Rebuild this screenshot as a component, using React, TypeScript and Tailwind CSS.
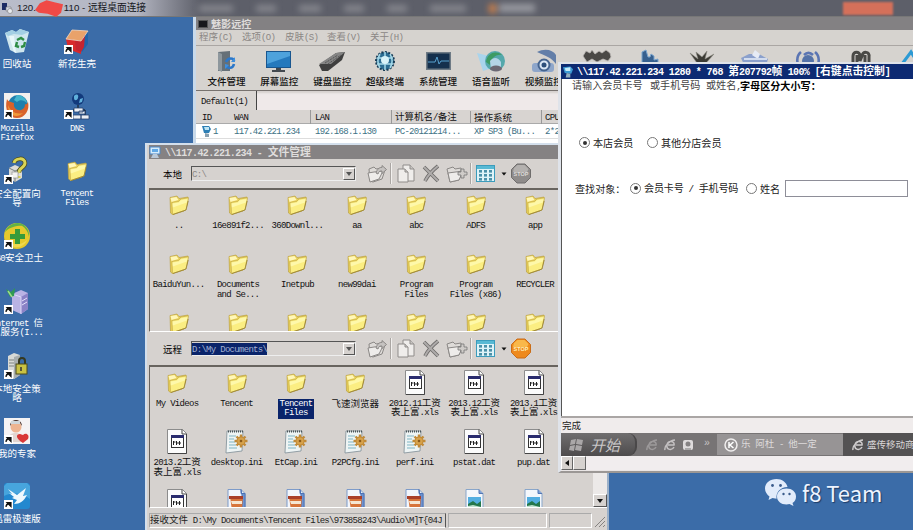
import type { ReactNode } from 'react';

type Size = 'sm' | 'md' | 'lg';

const CJK: Record<Size, string> = {
  sm: "font-['Noto_Sans_CJK_SC',sans-serif] text-[9.500px]",
  md: "font-['Noto_Sans_CJK_SC',sans-serif] text-[10.100px]",
  lg: "font-['Noto_Sans_CJK_SC',sans-serif] text-[10.800px]",
};
const LATIN: Record<Size, string> = {
  sm: "font-['Liberation_Mono',monospace] text-[9px] tracking-[-0.700px]",
  md: "font-['Liberation_Mono',monospace] text-[9.400px] tracking-[-0.600px]",
  lg: "font-['Liberation_Mono',monospace] text-[10px] tracking-[-0.600px]",
};

function T({ s, size = 'sm', className = '' }: { s: string; size?: Size; className?: string }) {
  const parts = s.match(/[\u2e80-\uffff]+|[^\u2e80-\uffff]+/g) ?? [];
  return (
    <span className={'whitespace-pre ' + CJK[size] + ' ' + className}>
      {parts.map((p, i) => (
        <span key={i} className={/[\u2e80-\uffff]/.test(p) ? '' : LATIN[size]}>
          {p}
        </span>
      ))}
    </span>
  );
}

function Lines({ text }: { text: string }) {
  return (
    <>
      {text.split('\n').map((l, i) => (
        <div key={i} className="flex h-[9.400px] items-center justify-center leading-[9.400px]">
          <T s={l} />
        </div>
      ))}
    </>
  );
}

/* ---------- desktop icons ---------- */

function Shortcut() {
  return (
    <g>
      <rect x="0" y="17" width="9" height="9" fill="#fff" />
      <path d="M2 24c0-2.500 1-3.500 3-3.500M3 19.500h4v4z" fill="#111" stroke="#111" strokeWidth="1.200" />
    </g>
  );
}

function Ico({ children, shortcut = true }: { children: ReactNode; shortcut?: boolean }) {
  return (
    <svg viewBox="0 0 26 26" className="h-[26px] w-[26px] overflow-visible">
      {children}
      {shortcut && <Shortcut />}
    </svg>
  );
}

const recycle = (
  <Ico shortcut={false}>
    <path d="M1 5l7-3 4 2 4-3 9 3-5 20-8 1-6-3z" fill="#cfe6ee" />
    <path d="M1 5l7-3 4 2 4-3 9 3-7 3-8-1-6 2z" fill="#a3cfe4" />
    <path d="M5 8l5 16 2 1-2-17z" fill="#e9f7fa" />
    <path d="M13 12l4-2 3 2M21 14l-1 4-3 1M15 19l-3-1 1-4" fill="none" stroke="#2f8d45" strokeWidth="2.400" />
  </Ico>
);
const xinhua = (
  <Ico>
    <path d="M2 11L8 2l16 1-7 10z" fill="#e9a26a" />
    <path d="M2 11l15 2v13L4 21z" fill="#d82a2c" />
    <path d="M17 13l7-10v13l-6 8z" fill="#1f63a8" />
    <path d="M11 13l6 0 4-6-1 12-3 5-5-2z" fill="#c42430" />
    <path d="M2 11L8 2l16 1-7 10z" fill="none" stroke="#f6d9c0" strokeWidth=".8" />
  </Ico>
);
const firefox = (
  <Ico>
    <rect width="26" height="26" fill="#f3f0ee" />
    <circle cx="14" cy="12" r="10" fill="#1d7fae" />
    <path d="M13 2c5 0 9 3 10 8-3-3-7-4-10-1l-3-2z" fill="#43b4cc" />
    <path d="M3 6c1 3 5 3 7 4-1 5 3 8 7 7 3-1 4-3 4-6 1 1 2 0 3-2 2 8-3 16-11 16S0 17 3 6z" fill="#d9622a" />
    <path d="M4 12c2 6 8 10 15 8-6 6-15 3-15-8z" fill="#f09a3a" />
  </Ico>
);
const dns = (
  <Ico>
    <circle cx="14" cy="6" r="6" fill="#123a7c" />
    <path d="M10 3c3-3 5-1 4 2s-4 3-4 0zM16 6l3-1-1 4-3 1z" fill="#5fb0dc" />
    <path d="M14 12v4M9 17h12v5M4 25V19" stroke="#111" fill="none" />
    <path d="M10 15h9v4h-9zM9 22h8v4H9zM17 22h8v4h-8zM15 18h6v3h-6z" fill="#eceff4" stroke="#27436e" strokeWidth=".8" />
  </Ico>
);
const security = (
  <Ico>
    <path d="M5 10l6-3 7 3v10l-7 4-6-4z" fill="#dcdcd8" />
    <path d="M5 10l6 3v11M11 13l7-3" fill="none" stroke="#77807f" />
    <path d="M10 5c1-5 11-6 11 0 0 5-7 5-6 10" fill="none" stroke="#4a4a1c" strokeWidth="4.500" />
    <path d="M10 5c1-5 11-6 11 0 0 5-7 5-6 10M15 18v2" fill="none" stroke="#d9d556" strokeWidth="3" />
    <rect x="8" y="14" width="6" height="6" fill="#f3f3f0" stroke="#888" strokeWidth=".6" />
  </Ico>
);
const s360 = (
  <Ico>
    <circle cx="13" cy="13" r="13" fill="#e5c92c" />
    <path d="M1 9C4 1 14-3 21 3c-5-1-15 0-20 6zM15 1c6 0 11 6 10 13-1-6-4-10-10-13z" fill="#62b345" />
    <path d="M11 6h5v5h5v5h-5v5h-5v-5H6v-5h5z" fill="#379b3a" />
    <path d="M3 17c4 5 14 6 20 0-2 7-15 12-20 0z" fill="#f2df60" opacity=".7" />
  </Ico>
);
const iis = (
  <Ico>
    <path d="M8 6l9-4 7 3v16l-7 5-9-4z" fill="#b9b3e4" />
    <path d="M17 9l7-4v16l-7 5z" fill="#8a82c6" />
    <path d="M8 6l9 3v17" fill="none" stroke="#ddd8f8" />
    <path d="M18 13l5-3M18 17l5-3" stroke="#e6e2fb" />
    <path d="M2 1l5 3 4-4-1 8-4 1z" fill="#2f9a51" />
    <path d="M4 3l4 6" stroke="#9fdc8a" strokeWidth="1.500" />
  </Ico>
);
const policy = (
  <Ico>
    <path d="M4 3l6-3 6 2v20l-6 4-6-3z" fill="#d8dad6" />
    <path d="M10 4l6-2v20l-6 4z" fill="#a8aeae" />
    <path d="M5 7h5M5 10h5M5 13h5" stroke="#7d8380" />
    <path d="M15 12V8c0-4 6-4 6 0v4" fill="none" stroke="#34381f" strokeWidth="2" />
    <rect x="12" y="11" width="11" height="10" fill="#c9c243" stroke="#4c4b1a" />
    <path d="M17 14v4" stroke="#333" strokeWidth="1.500" />
  </Ico>
);
const expert = (
  <Ico>
    <rect width="26" height="26" fill="#f5f3f4" />
    <path d="M3 24c1-8 5-9 9-9s7 2 8 9z" fill="#e2d5d0" />
    <circle cx="12" cy="9" r="5.500" fill="#edb491" />
    <path d="M6 8c0-8 12-8 12 0l-2-3H8z" fill="#513b35" />
    <path d="M7 3h9v3H7z" fill="#cfd6da" />
    <path d="M19 25c-8-5-7-9-3-9l3 1c3-3 7 0 5 4z" fill="#d93838" />
  </Ico>
);
const xunlei = (
  <Ico>
    <rect width="26" height="26" rx="3" fill="#2388cf" />
    <path d="M0 13c9-4 18-3 26 3v-13l-3-3H3L0 3z" fill="#47a5dd" />
    <path d="M4 6l9 6 9-7-3 8 4-1c-3 6-7 9-13 9l3-4-5-2 2-1-5-4 3 1z" fill="#eef8fd" />
  </Ico>
);

function Folder() {
  return (
    <svg viewBox="0 0 20 20" className="h-5 w-5 shrink-0">
      <path d="M1 2.500l7-1.500 2 2.500 9-1.500-.5 7L15 16 3.500 19.500 1.500 18z" fill="#e8cf57" stroke="#b59b3c" strokeWidth=".6" />
      <path d="M1.500 3l6-1 2 3-7 2z" fill="#fff7b8" />
      <path d="M3 7.500l6.500-1L12 4l7.500-1.200L17 15 3.500 19.500z" fill="#fbee82" stroke="#c0a544" strokeWidth=".6" />
      <path d="M3.500 8.500L10 7.500l2-2.300 6.500-1-.7 3.300-14 5z" fill="#fffab4" opacity=".8" />
      <path d="M4 19.500L17 15l2.200-9" fill="none" stroke="#8f7a2c" strokeWidth=".7" />
    </svg>
  );
}

function DesktopItem({ icon, label }: { icon: ReactNode; label: string }) {
  return (
    <div className="flex h-[65px] w-[60px] flex-col items-center text-white">
      <div className="mb-[4.500px] flex h-[26px] items-center">{icon}</div>
      <Lines text={label} />
    </div>
  );
}

/* ---------- file type icons ---------- */

function Xls() {
  return (
    <svg viewBox="0 0 20 25" className="h-[25px] w-5">
      <path d="M.5.5h15l4 4v20H.5z" fill="#fbfbfb" stroke="#8c8c8c" />
      <path d="M15 .5v4.500h4.500M19.500 5v19.500H1" fill="none" stroke="#444" />
      <rect x="4.500" y="6.500" width="12" height="12" fill="#fff" stroke="#333" />
      <rect x="4" y="6" width="13" height="3" fill="#2a2c6e" />
      <path d="M6.500 12v4M9.500 12v4M12.500 12v4M6.500 13h2M10 14h4" stroke="#222" />
    </svg>
  );
}
function Ini() {
  return (
    <svg viewBox="0 0 23 25" className="h-[25px] w-[23px]">
      <path d="M2 2h16l-1 20-16 2z" fill="#eef4f4" stroke="#7e8d96" strokeWidth=".8" />
      <path d="M3 2.500h15" stroke="#4a5458" strokeWidth="2" strokeDasharray="1 1" />
      <path d="M4 7h7M4 10h5M4 13h6M4 16h7M4 19h8" stroke="#7fb5c4" />
      <g transform="translate(16 12)">
        <circle r="4.500" fill="#c98a2c" />
        <path d="M0-6.500V6.500M-6.500 0H6.500M-4.500-4.500l9 9M4.500-4.500l-9 9" stroke="#c08a38" strokeWidth="2.400" />
        <circle r="3.500" fill="#d6a24c" />
        <circle r="1.300" fill="#8b5b1b" />
      </g>
    </svg>
  );
}
function Clip() {
  return (
    <svg viewBox="0 0 19 24" className="h-6 w-[19px]">
      <path d="M1 .5h13l4 4v19H1z" fill="#f2f5fb" stroke="#7d9bc9" />
      <path d="M14 .5v4h4v19h-3V6z" fill="#6f93cf" stroke="#4e73b4" />
      <path d="M3 7h13l-1 15H5z" fill="#d7743a" />
      <path d="M2 7h14v3H2z" fill="#a93f28" />
      <path d="M4 12h11v3H5z" fill="#f5e6d2" />
    </svg>
  );
}
function Pic() {
  return (
    <svg viewBox="0 0 19 24" className="h-6 w-[19px]">
      <path d="M1 .5h13l4 4v19H1z" fill="#f4f7fb" stroke="#89a6ca" />
      <path d="M14 .5v4h4" fill="#7ea1d6" stroke="#5377b4" />
      <rect x="3" y="8" width="13" height="11" fill="#53aee0" />
      <path d="M3 15l5-3 4 3 4-3v7H3z" fill="#23774b" />
      <path d="M3 17l5-1 8 2v1H3z" fill="#bfe0cf" />
    </svg>
  );
}

function FileItem({ icon, label, selected }: { icon: ReactNode; label: string; selected?: boolean }) {
  return (
    <div className="flex h-[59.300px] w-[59.400px] shrink-0 flex-col items-center text-[#111]">
      <div className="mb-[4px] flex h-[25px] items-center">{icon}</div>
      <div className={selected ? 'bg-[#0a246a] px-[2px] pb-[1px] text-white' : ''}>
        <Lines text={label} />
      </div>
    </div>
  );
}

/* ---------- file window toolbar ---------- */

function PathBar({ title, path, remote }: { title: string; path: string; remote?: boolean }) {
  return (
    <div className={'flex shrink-0 items-center pl-[14px] ' + (remote ? 'h-[33px]' : 'h-[29px]')}>
      <T s={title} className="w-[28px] text-black" />
      <div className="flex h-[15px] w-[165px] items-center border border-b-[#eee] border-r-[#eee] border-l-[#555] border-t-[#555] bg-[#d6d2cf]">
        <div className={'flex h-[12px] items-center leading-[12px] ' + (remote ? 'bg-[#0a246a] text-[#a3b1d4]' : 'text-[#8c8886]')}>
          <T s={path} />
        </div>
        <div className="ml-auto flex h-[12px] w-[12px] items-center justify-center border border-b-[#555] border-r-[#555] border-l-white border-t-white">
          <svg viewBox="0 0 6 4" className="h-[4px] w-[6px]"><path d="M0 0h6L3 4z" fill="#555" /></svg>
        </div>
      </div>
      <svg viewBox="0 0 180 24" className="ml-[8px] h-6 w-[180px]">
        <g strokeWidth="1" stroke="#8b8886" fill="#dedbd8">
          <path d="M5 7l5-2 2 2 6-1 3 2-3 9-9 3-3-1z" />
          <path d="M4 11l6-1 9-1-4 8-9 3z" fill="#eeecea" />
          <path d="M12 11c1-4 4-6 6-5.500V3.500l4.500 4-4.500 4V9c-2 0-3 0-4 3z" fill="#c5c2c0" />
        </g>
        <path d="M26.500 1v21M106.500 1v21" stroke="#aaa6a3" />
        <path d="M27.500 1v21M107.500 1v21" stroke="#f2f0ee" />
        <g stroke="#8f8c8a" fill="#efedeb">
          <path d="M39 3h7l4 4v12H39z" />
          <path d="M46 3v4h4" fill="#c9c6c3" />
          <path d="M34 7h7l3 3v10H34z" />
          <path d="M41 7v3h3" fill="#c9c6c3" />
        </g>
        <path d="M60 5l14 14M74 4c-5 4-10 9-13 15" stroke="#6d6b6a" strokeWidth="3.600" fill="none" />
        <path d="M60 5l14 14M74 4c-5 4-10 9-13 15" stroke="#aeabaa" strokeWidth="2" fill="none" />
        <path d="M83 7l6-2 2 2 6-1v3l-2 9-9 2z" fill="#dedbd8" stroke="#8b8886" />
        <path d="M84 11l15-2-4 9-9 2z" fill="#eeecea" stroke="#8b8886" />
        <path d="M94 10h3V7h3v3h3v3h-3v3h-3v-3h-3z" fill="#cfccc9" stroke="#777" strokeWidth=".8" />
        <rect x="112.500" y="3.500" width="18" height="16" fill="#def3f8" stroke="#3b9cbc" />
        <rect x="113" y="4" width="17" height="3" fill="#58b9d4" />
        <g fill="#4b91a9">
          {[115, 120, 125].map((x) => [9, 13, 17].map((y) => <rect key={x + '-' + y} x={x} y={y - 1} width="3" height="2.600" />))}
        </g>
        <path d="M137.500 10.500h5l-2.500 3z" fill="#111" />
        <path d="M153 2h8l5.500 5.500v8L161 21h-8l-5.500-5.500v-8z" fill={remote ? '#ee8a1d' : '#8f8c8b'} stroke={remote ? '#c96d18' : '#6f6d6c'} />
        <path d="M150 6l3.500-3h7l4 4-1.500 3h-14z" fill={remote ? '#f9b84a' : '#b4b1af'} />
        <text x="157" y="14" textAnchor="middle" className="font-['Liberation_Sans',sans-serif] text-[5.500px] font-bold" fill={remote ? '#fff0b8' : '#dedbd9'}>STOP</text>
      </svg>
    </div>
  );
}

/* ---------- main window toolbar icons ---------- */

const mainTools: { label: string; art: ReactNode }[] = [
  { label: '文件管理', art: <><path d="M5 2l12-1v20H5z" fill="#667078" /><path d="M5 2l4 2v18l-4-2z" fill="#8e979d" /><path d="M13 12c2-5 8-4 8-1M21 14c-1 5-7 5-8 1" stroke="#2c77c9" strokeWidth="2.500" fill="none" /><path d="M22 7v5h-4zM12 19v-5l4 1z" fill="#3f8fdd" /></> },
  { label: '屏幕监控', art: <><rect x="0" y="1" width="25" height="17" fill="#19568f" /><path d="M1 2h23v15H1z" fill="#2579bd" /><path d="M1 2h23v4L1 14z" fill="#4ea2dc" /><path d="M10 18h5v2h4v2H6v-2h4z" fill="#43494f" /></> },
  { label: '键盘监控', art: <><path d="M0 15L17 3l9-1-3 8L9 21H3z" fill="#3f3f3f" /><path d="M0 14L17 3l9-1-14 12z" fill="#858585" /><path d="M6 13L19 5M9 14l13-9" stroke="#555" strokeDasharray="2 1" /></> },
  { label: '超级终端', art: <><circle cx="13" cy="11" r="9" fill="#2c6d92" stroke="#173c56" strokeWidth="2" strokeDasharray="2 1.500" /><path d="M5 8h16M5 14h16M13 2v18M8 4c-3 5-3 9 0 14M18 4c3 5 3 9 0 14" stroke="#a5d9e9" strokeWidth="1.500" fill="none" /><circle cx="13" cy="10" r="4" fill="#d9f3f8" /></> },
  { label: '系统管理', art: <><rect x="1" y="2" width="25" height="18" fill="#6e7a85" /><rect x="2.500" y="3.500" width="22" height="15" fill="#15304d" /><path d="M3 12h7l2-5 2 7 2-3h8" stroke="#58a1cf" fill="none" /></> },
  { label: '语音监听', art: <><path d="M-1 3l12 3 3 12-9 3z" fill="#a9d4ec" /><circle cx="17" cy="11" r="10" fill="#55a8ab" /><path d="M8 12c1-9 10-12 16-7-7-1-11 4-12 10z" fill="#3d9b63" /><path d="M12 11c3-4 8-4 11 1v6l-10 1z" fill="#b3d3e6" /><ellipse cx="18" cy="18.500" rx="6" ry="3" fill="#6b6773" /></> },
  { label: '视频监控', art: <><path d="M6 2c8-4 16-2 19 3v9c-4-6-10-8-19-12z" fill="#637ea8" /><rect x="1" y="13" width="22" height="9" rx="3" fill="#8ea6ca" /><circle cx="13" cy="15" r="5.500" fill="#dbe7f5" stroke="#45648f" strokeWidth="2" /><circle cx="13" cy="15" r="2.500" fill="#2c4f7b" /></> },
  { label: '', art: <path d="M-1 6l3-5 4 2 2-3 3 4 4-3 3 2 4-3 4 3 1 4-3 4-5-2-6 3-5-3-5 3z" fill="#4a4846" stroke="#bbb8b5" strokeWidth=".8" /> },
  { label: '', art: <path d="M5 22V2l4-2 2 7h2l1-3 3 2v4l4-1v13z" fill="#37608f" stroke="#7ba5ce" /> },
  { label: '', art: <path d="M1 3l8 6L7 2l6 5 5-6-2 8 9-5-8 9H8z" fill="#3b3a34" stroke="#8b8a82" strokeWidth=".6" /> },
  { label: '', art: <><path d="M-1 8l8-4h10l9 5-3 10H4z" fill="#8ba0cc" /><path d="M10 5l3-5 5 4-2 5z" fill="#e6ebf5" /><path d="M2 9h23" stroke="#d2dcee" strokeWidth="2" /></> },
  { label: '', art: <><circle cx="13" cy="11" r="6" fill="#5472a8" /><path d="M6 2c-5 4-5 12 0 17M20 2c5 4 5 12 0 17M9 5c3-3 6-3 9 0" stroke="#5b75b3" strokeWidth="2.600" fill="none" /></> },
  { label: '', art: <path d="M5 22V6c0-5 7-5 7 0v5l2-5c1-5 8-5 7 1v15M9 5v8M17 5v8" stroke="#4a4946" strokeWidth="3" fill="none" /> },
  { label: '', art: <path d="M1 14L10 2l5 8 5-7 5 11" stroke="#2c9ad4" strokeWidth="3" fill="none" /> },
];

function MainWindow() {
  return (
    <div className="absolute left-[193px] top-[17px] flex h-[300px] w-[760px] flex-col border-l-[3px] border-[#c8d9ea] bg-[#d6d3cf]">
      <div className="flex h-[13px] shrink-0 items-center bg-[#838183] pl-[2px] font-bold leading-[12px] text-[#dedcdb]">
        <span className="mr-[3px] flex h-[8px] w-[10px] border border-[#555] bg-[#17171b]" />
        <T s="魅影远控" size="md" />
      </div>
      <div className="flex h-[16px] shrink-0 items-center border-b border-[#aaa6a3] pl-[3px] leading-[15px] text-[#8b8785]">
        <T s="程序(C)" className="w-[43px]" />
        <T s="选项(O)" className="w-[43px]" />
        <T s="皮肤(S)" className="w-[42px]" />
        <T s="查看(V)" className="w-[43px]" />
        <T s="关于(H)" />
      </div>
      <div className="flex h-[45px] shrink-0 border-b border-[#77726f] pl-[4px] pt-[4px]">
        {mainTools.map((t, i) => (
          <div key={i} className="flex w-[52.900px] shrink-0 flex-col items-center">
            <svg viewBox="0 0 26 23" className="mb-[2px] h-[23px] w-[26px] overflow-visible">{t.art}</svg>
            <T s={t.label} className="font-medium leading-[12px] text-[#111]" />
          </div>
        ))}
      </div>
      <div className="flex h-[19px] shrink-0 bg-[#efe9e9] shadow-[inset_0_2px_2px_#d5d1cf]">
        <div className="flex w-[61px] items-center pl-[5px] text-[#111] border-r border-[#444] bg-[#dad6d3]"><T s="Default(1)" /></div>
      </div>
      <div className="flex h-[14px] shrink-0 items-center border-b border-[#aaa] bg-[#d8d4d1] text-[#111]">
        <T s="ID" className="w-[34px] pl-[6px]" />
        <T s="WAN" className="w-[80px] pl-[4px]" />
        <T s="LAN" className="w-[81px] border-l border-[#999] pl-[4px]" />
        <T s="计算机名/备注" className="w-[79px] border-l border-[#999] pl-[3px]" />
        <T s="操作系统" className="w-[71px] border-l border-[#999] pl-[3px]" />
        <T s="CPU" className="border-l border-[#999] pl-[3px]" />
      </div>
      <div className="flex h-[15px] shrink-0 items-center border-b border-[#ddd] bg-white text-[#3d7184]">
        <svg viewBox="0 0 10 12" className="ml-[6px] h-3 w-[10px]"><path d="M0 1h7l2 3-2 4H2z" fill="#2e7fb5" /><path d="M2 2h5v3H3z" fill="#bfe5f4" /><path d="M3 8l4 1v3H3z" fill="#8aa1b0" /></svg>
        <T s="1" className="w-[22px] pl-[1px]" />
        <T s="117.42.221.234" className="w-[77px]" />
        <T s="192.168.1.130" className="w-[80px] pl-[4px]" />
        <T s="PC-20121214..." className="w-[79px] pl-[4px]" />
        <T s="XP SP3 (Bu..." className="w-[71px] pl-[4px]" />
        <T s="2*2" className="pl-[4px]" />
      </div>
      <div className="grow bg-white" />
    </div>
  );
}

const localFiles = [
  '..', '16e891f2...', '360Downl...', 'aa', 'abc', 'ADFS', 'app',
  'BaiduYun...', 'Documents\nand Se...', 'Inetpub', 'new99dai', 'Program\nFiles', 'Program\nFiles (x86)', 'RECYCLER',
  '', '', '', '', '', '', '',
];

type Kind = 'folder' | 'xls' | 'ini' | 'clip' | 'pic';
const remoteFiles: [Kind, string][] = [
  ['folder', 'My Videos'], ['folder', 'Tencent'], ['folder', 'Tencent\nFiles'], ['folder', '飞速浏览器'],
  ['xls', '2012.11工资\n表上富.xls'], ['xls', '2013.12工资\n表上富.xls'], ['xls', '2013.1工资\n表上富.xls'],
  ['xls', '2013.2工资\n表上富.xls'], ['ini', 'desktop.ini'], ['ini', 'EtCap.ini'], ['ini', 'P2PCfg.ini'],
  ['ini', 'perf.ini'], ['xls', 'pstat.dat'], ['xls', 'pup.dat'],
  ['xls', ''], ['clip', ''], ['clip', ''], ['clip', ''], ['clip', ''], ['pic', ''], ['pic', ''],
];
const kindIcon: Record<Kind, ReactNode> = { folder: <Folder />, xls: <Xls />, ini: <Ini />, clip: <Clip />, pic: <Pic /> };

function FileWindow() {
  return (
    <div className="absolute left-[145px] top-[143px] flex h-[387px] w-[464px] flex-col border-l-2 border-r-2 border-t-2 border-[#d3dfec] border-r-[#9bb0c8] bg-[#d6d2cf] pl-[2px]">
      <div className="flex h-[14px] shrink-0 items-center bg-[#858283] font-bold leading-[14px] text-[#dfdddc]">
        <svg viewBox="0 0 12 12" className="mr-[4px] h-3 w-3"><path d="M1 1h10v7H1z" fill="#d7ecfb" stroke="#4c87c5" /><path d="M3 3h6v3H3z" fill="#62a9e6" /><path d="M4 8h4l2 4H2z" fill="#b9c8d8" /></svg>
        <T s={'\\\\117.42.221.234 - 文件管理'} size="lg" />
      </div>
      <PathBar title="本地" path={'C:\\'} />
      <div className="flex h-[144px] shrink-0 overflow-hidden border-l border-t-2 border-[#68645f] border-b border-b-white pt-[2px]">
        <div className="-ml-[1px] flex w-[445px] flex-wrap content-start">
          {localFiles.map((f, i) => <FileItem key={i} icon={<Folder />} label={f} />)}
        </div>
      </div>
      <PathBar title="远程" path={'D:\\My Documents\\'} remote />
      <div className="flex h-[143px] shrink-0 border-b border-l border-t-2 border-b-white border-[#68645f]">
        <div className="-ml-[2.500px] flex w-[445px] flex-wrap content-start overflow-hidden pt-[3px]">
          {remoteFiles.map(([k, l], i) => <FileItem key={i} icon={kindIcon[k]} label={l} selected={i === 2} />)}
        </div>
        <div className="ml-auto flex w-[14px] flex-col justify-end bg-[#ece9e8]">
          <div className="flex h-[13px] items-center justify-center border border-b-[#555] border-r-[#555] border-l-white border-t-white bg-[#d6d2cf]">
            <svg viewBox="0 0 6 4" className="h-1 w-[6px]"><path d="M0 0h6L3 4z" fill="#111" /></svg>
          </div>
        </div>
      </div>
      <div className="flex grow items-center gap-[2px] pb-[1px] pt-[3px] text-[#222]">
        <div className="flex h-[15px] w-[297px] items-center overflow-hidden border border-[#aaa] border-b-white border-r-[#555] leading-[13px]">
          <T s={'接收文件 D:\\My Documents\\Tencent Files\\973858243\\Audio\\M]T{04J'} />
        </div>
        <div className="h-[15px] w-[99px] border border-[#aaa] border-b-white border-r-white" />
        <div className="h-[15px] w-[43px] border border-[#aaa] border-b-white border-r-white" />
        <svg viewBox="0 0 12 12" className="mt-[3px] h-3 w-3"><path d="M1 11L11 1M5 11l6-6M9 11l2-2" stroke="#858280" /></svg>
      </div>
    </div>
  );
}

function Radio({ on }: { on?: boolean }) {
  return (
    <span className="flex h-[11px] w-[11px] shrink-0 items-center justify-center rounded-full border border-[#777] bg-white">
      {on && <span className="h-[4px] w-[4px] rounded-full bg-[#333]" />}
    </span>
  );
}

function IeMark({ color }: { color: string }) {
  return (
    <svg viewBox="0 0 12 12" className="h-3 w-3"><path d="M10 8c-2 4-8 3-7-2s8-4 7 0H4M1 11C0 7 6 1 11 1" fill="none" stroke={color} strokeWidth="1.500" /></svg>
  );
}

function RemoteWindow() {
  return (
    <div className="absolute left-[558px] top-[62px] flex h-[411px] w-[400px] flex-col border-b-2 border-l-[3px] border-t-2 border-[#dfe3ea] border-b-[#9b9795] bg-[#e9e5e5]">
      <div className="flex h-[15px] shrink-0 items-center bg-[#0d2a72] font-bold leading-[14px] text-white">
        <svg viewBox="0 0 13 13" className="ml-[1px] mr-[3px] h-[13px] w-[12px]"><path d="M1 2l8-1 3 3-2 5-7-1z" fill="#3d9bd4" /><path d="M3 3l6-1v4H4z" fill="#c7ecfa" /><path d="M5 8l4 1v4H4z" fill="#93aebf" /></svg>
        <T s={'\\\\117.42.221.234 1280 * 768 第207792帧 100% [右键点击控制]'} size="lg" />
      </div>
      <div className="flex h-[337px] shrink-0 flex-col border-l border-[#555] bg-white text-[#222]">
        <div className="flex h-[14px] items-center pl-[10px] leading-[14px] text-[#444]">
          <T s="请输入会员卡号 " size="md" className="w-[78px]" />
          <T s="或手机号码 " size="md" className="w-[56px]" />
          <T s="或姓名," size="md" className="w-[34px]" />
          <T s="字母区分大小写：" size="md" className="font-bold text-black" />
        </div>
        <div className="mt-[42px] flex h-[15px] items-center pl-[17px] leading-[15px]">
          <Radio on /><T s="本店会员" size="md" className="ml-[3px] w-[54px]" />
          <Radio /><T s="其他分店会员" size="md" className="ml-[3px]" />
        </div>
        <div className="mt-[28px] flex h-[20px] items-center pl-[13px] leading-[15px]">
          <T s="查找对象：" size="md" className="w-[55px]" />
          <Radio on /><T s="会员卡号 / 手机号码" size="md" className="ml-[3px] w-[102px] tracking-[-0.200px]" />
          <Radio /><T s="姓名" size="md" className="ml-[3px] w-[25px]" />
          <div className="h-[17px] w-[123px] border border-[#8e8e98] bg-white" />
        </div>
      </div>
      <div className="flex h-[17px] shrink-0 items-center border-t-2 border-[#aaa6a5] bg-[#f0ecec] pl-[1px] leading-[15px] text-[#222]"><T s="完成" /></div>
      <div className="flex h-[23px] shrink-0 items-center bg-[#777475] leading-[20px] text-white">
        <div className="flex h-[23px] w-[76px] items-center rounded-r-[9px] border-r-2 border-[#4a4849] bg-linear-to-b from-[#706e6f] to-[#4d4b4c] pl-[8px]">
          <svg viewBox="0 0 16 14" className="h-[14px] w-4"><g fill="#aaa7a8"><path d="M2 2l5-1-1 5-5 1zM8 1l6 1-1 5-6-1zM1 8l5-1-1 6-5-1zM7 7l6 1-1 5-6-1z" /></g></svg>
          <span className="ml-[5px] font-['Noto_Sans_CJK_SC',sans-serif] text-[15px] italic text-[#c9c7c8]">开始</span>
        </div>
        <div className="ml-[9px] flex w-[71px] items-center gap-[6px]">
          <IeMark color="#9d9a9b" /><IeMark color="#c4c1c2" />
          <svg viewBox="0 0 12 12" className="h-3 w-3"><rect x="1" y="1" width="10" height="10" rx="2" fill="#dedbdc" /><circle cx="6" cy="5" r="2.500" fill="#858283" /><path d="M3 10h6" stroke="#777" /></svg>
          <T s="»" size="lg" className="-mt-[4px] ml-[4px] text-[#c4c1c2]" />
        </div>
        <div className="flex h-[21px] w-[126px] items-center bg-[#979495] pl-[7px] leading-[21px] text-[#dedbdc]">
          <svg viewBox="0 0 14 14" className="mr-[3px] h-[14px] w-[14px]"><circle cx="7" cy="7" r="6" fill="none" stroke="#f0eeee" strokeWidth="1.500" /><path d="M5 4v6M9.500 4L6 7l3.500 3" stroke="#fff" strokeWidth="1.500" fill="none" /></svg>
          <T s="乐 阿杜 - 他一定" />
        </div>
        <div className="flex h-[23px] grow items-center gap-[3px] bg-[#545253] pl-[9px] leading-[23px] text-[#d9d6d7]">
          <IeMark color="#d0cdce" /><T s="盛传移动商" />
        </div>
      </div>
      <div className="flex h-[14px] shrink-0 bg-[#f1edee]">
        <div className="flex w-[12px] items-center justify-center border border-b-[#666] border-r-[#666] border-l-white border-t-white bg-[#d6d2cf]">
          <svg viewBox="0 0 4 6" className="h-[6px] w-1"><path d="M4 0v6L0 3z" fill="#111" /></svg>
        </div>
        <div className="w-[13px] border border-b-[#666] border-r-[#666] border-l-white border-t-white bg-[#d6d2cf]" />
      </div>
    </div>
  );
}

export default function App() {
  return (
    <div className="relative h-[530px] w-[913px] overflow-hidden bg-[#3b6ca8] leading-[12px]">
      <div className="flex h-[17px] items-center border-b border-[#777] bg-linear-to-r from-[#b9bdca] from-0% via-[#b4b6c2] via-[15%] to-[#5d5f69] to-[22%]">
        <svg viewBox="0 0 12 12" className="ml-[1px] h-3 w-3"><path d="M1 1h5v7H1z" fill="#1c2c65" /><path d="M5 5h5v4H5z" fill="#d7dde8" stroke="#777" strokeWidth=".6" /><circle cx="9" cy="9" r="2.500" fill="#e8ebef" stroke="#777" strokeWidth=".6" /></svg>
        <div className="ml-[4px] flex w-[182px] items-center whitespace-pre font-['Liberation_Sans','Noto_Sans_CJK_SC',sans-serif] text-[9.700px] leading-[16px] text-[#15161c]">
          <span>120.</span>
          <svg viewBox="0 0 30 17" className="-ml-[1px] h-[17px] w-[29px]"><path d="M0 10L5 3l7-3 8 2 9 2-2 9-5 4-9-3-9-1z" fill="#f04a46" /></svg>
          <span>110 - 远程桌面连接</span>
        </div>
        <div className="flex items-center gap-[23px] blur-[3px]">
          <span className="h-[7px] w-[34px] bg-[#85868d]" />
          <span className="h-[7px] w-[20px] bg-[#85868d]" />
          <span className="h-[7px] w-[22px] bg-[#85868d]" />
          <span className="h-[7px] w-[20px] bg-[#85868d]" />
          <span className="h-[7px] w-[20px] bg-[#85868d]" />
          <span className="h-[7px] w-[36px] bg-[#85868d]" />
          <span className="h-[9px] w-[7px] bg-[#d08149]" />
          <span className="-ml-[20px] h-[8px] w-[36px] bg-[#999aa1]" />
        </div>
        <div className="ml-auto mr-[20px] h-[13px] w-[50px] bg-[#d4705a] blur-[1px]" />
      </div>

      <div className="-ml-[13px] flex pt-[11px]">
        <div className="flex flex-col">
          <DesktopItem icon={recycle} label="回收站" />
          <DesktopItem icon={firefox} label={'Mozilla\nFirefox'} />
          <DesktopItem icon={security} label={'安全配置向\n导'} />
          <DesktopItem icon={s360} label="360安全卫士" />
          <DesktopItem icon={iis} label={'Internet 信\n息服务(I...'} />
          <DesktopItem icon={policy} label={'本地安全策\n略'} />
          <DesktopItem icon={expert} label="我的专家" />
          <DesktopItem icon={xunlei} label="迅雷极速版" />
        </div>
        <div className="flex flex-col">
          <DesktopItem icon={xinhua} label="新花生壳" />
          <DesktopItem icon={dns} label="DNS" />
          <DesktopItem icon={<Folder />} label={'Tencent\nFiles'} />
        </div>
      </div>

      <MainWindow />
      <FileWindow />
      <RemoteWindow />

      <div className="absolute left-[765px] top-[476px] flex items-center text-[#eef4ff]">
        <svg viewBox="0 0 32 27" className="h-[27px] w-8">
          <path d="M11.500 0C5 0 0 4 0 9.500c0 3.500 2 6 4.500 8L3.500 21l4-2 4 .7C11 13 15 8.500 22.500 8 21.500 3.500 17 0 11.500 0z" fill="#e2ecfb" />
          <path d="M21.500 9.500c-5.500 0-9.500 3.500-9.500 8s4 8 9.500 8l3-.5 4 2-1-3c2.500-1.700 3.500-3.700 3.500-6.500 0-4.500-4-8-9.500-8z" fill="#e2ecfb" />
          <g fill="#3b5c8c"><circle cx="7.500" cy="6.500" r="1.400" /><circle cx="15.500" cy="6.500" r="1.400" /><circle cx="18.500" cy="15" r="1.200" /><circle cx="24.500" cy="15" r="1.200" /></g>
        </svg>
        <span className="ml-[5px] font-['Noto_Sans_CJK_SC',sans-serif] text-[22px] leading-[32px] [text-shadow:1px_1px_1px_#1e3c66]">f8 Team</span>
      </div>
    </div>
  );
}
